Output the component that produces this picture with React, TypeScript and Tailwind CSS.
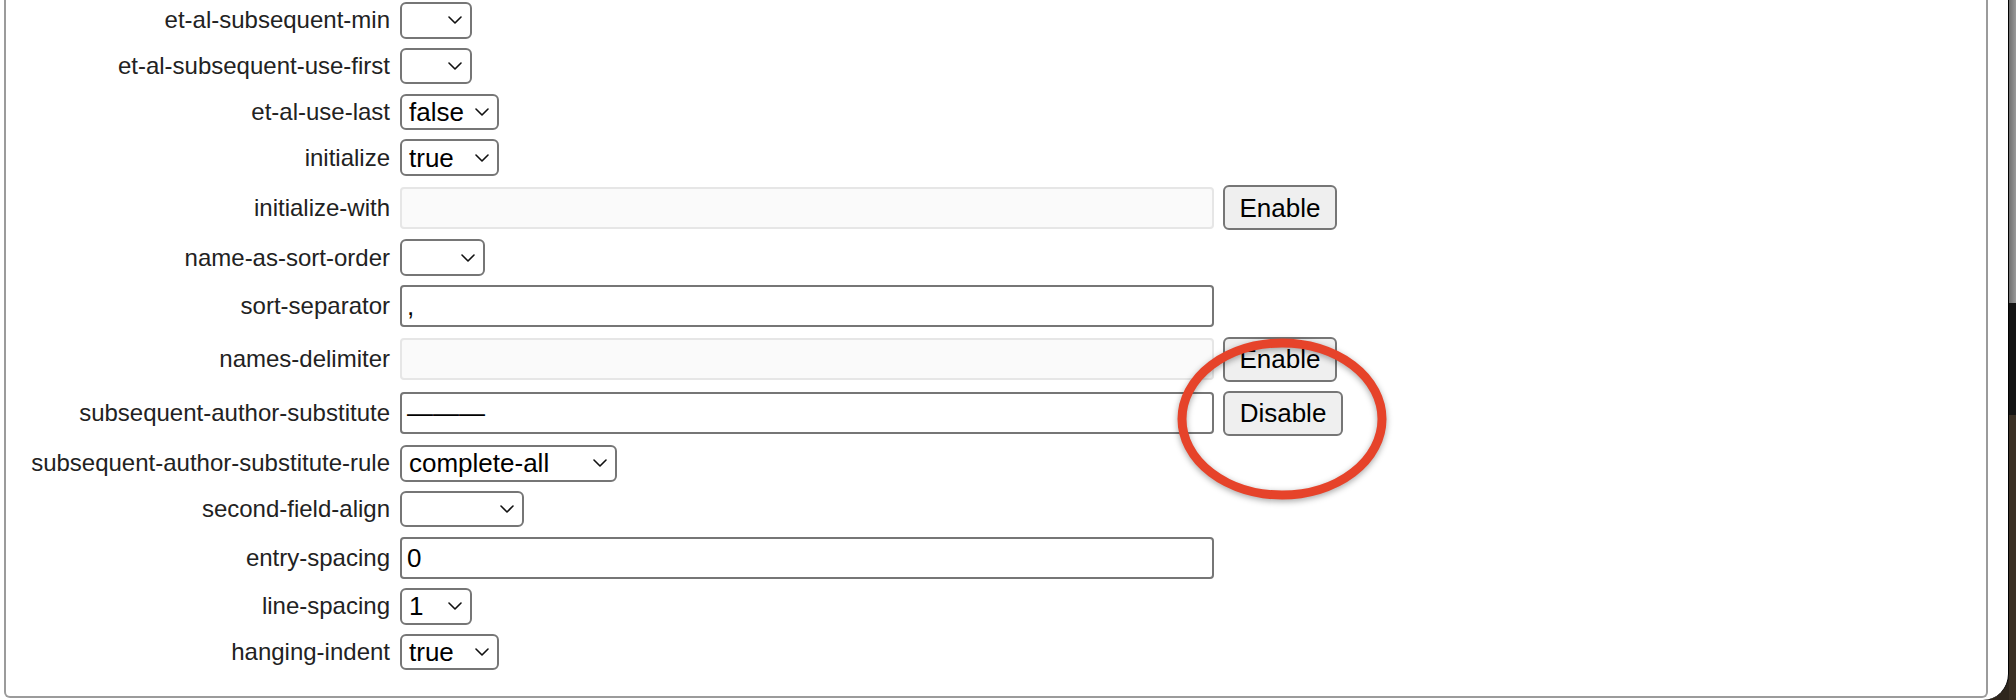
import React from 'react';

type Row =
  | { label: string; kind: 'select'; value: string; width: string }
  | { label: string; kind: 'input'; value: string; disabled?: boolean; button?: 'Enable' | 'Disable' };

const rows: Row[] = [
  { label: 'et-al-subsequent-min', kind: 'select', value: '', width: 'w-[72px]' },
  { label: 'et-al-subsequent-use-first', kind: 'select', value: '', width: 'w-[72px]' },
  { label: 'et-al-use-last', kind: 'select', value: 'false', width: 'w-[99px]' },
  { label: 'initialize', kind: 'select', value: 'true', width: 'w-[99px]' },
  { label: 'initialize-with', kind: 'input', value: '', disabled: true, button: 'Enable' },
  { label: 'name-as-sort-order', kind: 'select', value: '', width: 'w-[85px]' },
  { label: 'sort-separator', kind: 'input', value: ',' },
  { label: 'names-delimiter', kind: 'input', value: '', disabled: true, button: 'Enable' },
  { label: 'subsequent-author-substitute', kind: 'input', value: '———', button: 'Disable' },
  { label: 'subsequent-author-substitute-rule', kind: 'select', value: 'complete-all', width: 'w-[217px]' },
  { label: 'second-field-align', kind: 'select', value: '', width: 'w-[124px]' },
  { label: 'entry-spacing', kind: 'input', value: '0' },
  { label: 'line-spacing', kind: 'select', value: '1', width: 'w-[72px]' },
  { label: 'hanging-indent', kind: 'select', value: 'true', width: 'w-[99px]' },
];

const Chevron = () => (
  <svg width="14" height="8" viewBox="0 0 14 8" fill="none" className="shrink-0">
    <path d="M1 1 L7 7 L13 1" stroke="#111" strokeWidth="1.6" strokeLinecap="round" strokeLinejoin="round" />
  </svg>
);

const FakeSelect = ({ value, width }: { value: string; width: string }) => (
  <div
    className={`${width} h-[36.5px] flex items-center justify-between pl-[7px] pr-[8px] bg-white border-2 border-[#767676] rounded-[6px] text-[26px] text-black leading-none`}
  >
    <span className="whitespace-nowrap">{value}</span>
    <Chevron />
  </div>
);

const Field = ({ value, disabled }: { value: string; disabled?: boolean }) => (
  <div
    className={`w-[814px] h-[42px] flex items-center pl-[5px] border-2 rounded-[4px] text-[26px] text-black leading-none
    ${disabled ? 'bg-[#fafafa] border-[#e6e6e6]' : 'bg-white border-[#767676]'}`}
  >
    {value}
  </div>
);

const Button = ({ label }: { label: string }) => (
  <div
    className={`${label === 'Disable' ? 'w-[120px]' : 'w-[114px]'} h-[45px] flex items-center justify-center bg-[#efefef] border-2 border-[#767676] rounded-[6px] text-[26px] text-black leading-none`}
  >
    {label}
  </div>
);

export default function App() {
  return (
    <div className="w-[2016px] h-[700px] flex bg-[#2e261d] overflow-hidden font-['Liberation_Sans',Arial,sans-serif]">
      {/* window */}
      <div className="relative w-[2009px] h-[700px] shrink-0 bg-white border-r border-black rounded-br-[26px]">
        <div className="ml-[4px] w-[1984px] h-[698px] border-2 border-t-0 border-[#9b9b9b] rounded-b-[6px] pt-[2px] flex flex-col gap-[9.3px]">
          {rows.map((r) => (
            <div key={r.label} className="flex items-center">
              <div className="w-[384px] shrink-0 text-right text-[24px] text-[#222] leading-none">{r.label}</div>
              <div className="ml-[10px] flex items-center gap-[9px]">
                {r.kind === 'select' ? (
                  <FakeSelect value={r.value} width={r.width} />
                ) : (
                  <>
                    <Field value={r.value} disabled={r.disabled} />
                    {r.button && <Button label={r.button} />}
                  </>
                )}
              </div>
            </div>
          ))}
        </div>

        {/* red annotation ring */}
        <svg
          className="absolute left-[1170px] top-[328px] drop-shadow-[0_2px_3px_rgba(0,0,0,0.35)]"
          width="230"
          height="185"
          viewBox="0 0 230 185"
        >
          <ellipse cx="112" cy="91" rx="100" ry="76" fill="none" stroke="#e6432a" strokeWidth="9" />
        </svg>
      </div>

      {/* desktop strip */}
      <div className="flex-1 flex flex-col">
        <div className="h-[303px] bg-gradient-to-r from-[#6f6f6f] to-[#9a9a9a]" />
        <div className="h-[112px] bg-[#141414]" />
        <div className="flex-1 bg-[#3a3025]" />
      </div>
    </div>
  );
}
